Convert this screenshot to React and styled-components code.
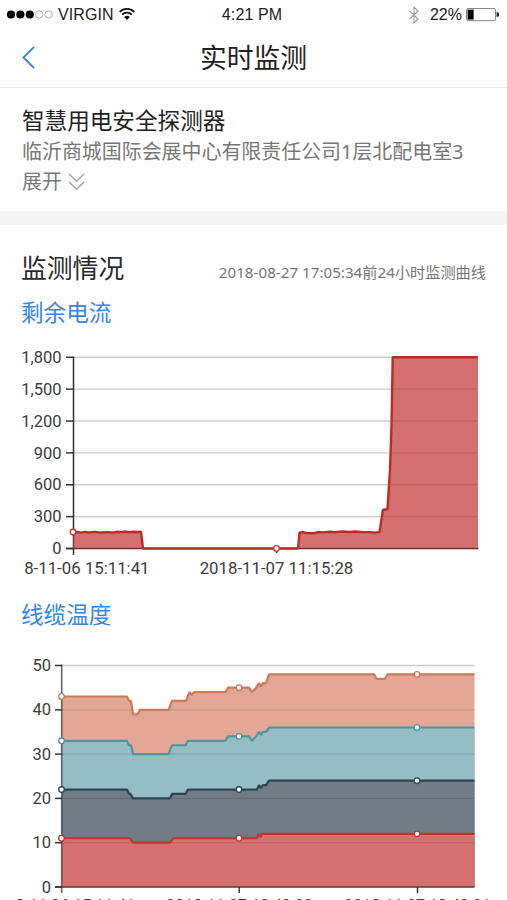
import React from "react";
import styled, { createGlobalStyle } from "styled-components";

const GlobalStyle = createGlobalStyle`
  * {
    box-sizing: border-box;
  }
  body {
    margin: 0;
    background: #fefefe;
    font-family: "Noto Sans", "Noto Sans CJK SC", sans-serif;
  }
`;

const Page = styled.div`
  width: 507px;
  height: 900px;
  overflow: hidden;
  background: #fefefe;
`;

const StatusBar = styled.div`
  height: 29px;
  padding: 0 8px 0 6px;
  display: grid;
  grid-template-columns: 1fr auto 1fr;
  align-items: center;
  font-family: "Liberation Sans", sans-serif;
  font-size: 16px;
  color: #222;
`;

const StatusGroup = styled.div`
  display: flex;
  align-items: center;
  justify-content: ${(props) => (props.$end ? "flex-end" : "flex-start")};
`;

const Carrier = styled.span`
  margin: 0 5px 0 4px;
  letter-spacing: 0.1px;
`;

const Time = styled.span`
  margin-right: 1px;
  letter-spacing: 0.1px;
`;

const Percent = styled.span`
  margin: 0 4px 0 11px;
`;

const Header = styled.header`
  height: 59px;
  padding: 0 21px;
  display: grid;
  grid-template-columns: 1fr auto 1fr;
  align-items: center;
  border-bottom: 1px solid #e6e6e6;
`;

const Title = styled.h1`
  margin: 0;
  font-size: 26.8px;
  line-height: 40px;
  font-weight: 400;
  color: #222;
`;

const Info = styled.section`
  height: 123px;
  padding: 17px 22px 0;
`;

const Name = styled.h2`
  margin: 0;
  font-size: 22.6px;
  line-height: 31px;
  font-weight: 400;
  color: #222;
`;

const Address = styled.div`
  padding-top: 1px;
  font-size: 19.95px;
  line-height: 30px;
  white-space: nowrap;
  color: #777;
`;

const Expand = styled.div`
  display: flex;
  align-items: center;
  gap: 6px;
  font-size: 19.9px;
  line-height: 30px;
  color: #777;
`;

const Divider = styled.div`
  height: 14px;
  background: #f4f4f4;
`;

const Monitor = styled.section`
  padding-top: 23px;
`;

const MonitorHead = styled.div`
  height: 44px;
  padding: 0 21px;
  display: flex;
  justify-content: space-between;
  align-items: baseline;
`;

const MonitorTitle = styled.h2`
  margin: 0;
  font-size: 25.8px;
  line-height: 40px;
  font-weight: 400;
  color: #2a2a2a;
`;

const Range = styled.span`
  font-size: 15.2px;
  color: #777;
`;

const ChartTitle = styled.h3`
  margin: 0;
  padding-left: 21px;
  height: 42px;
  font-size: 22.6px;
  line-height: 42px;
  font-weight: 400;
  color: #3585e8;
`;

const Chart = styled.svg`
  display: block;
`;

const AxisText = styled.text`
  font-family: Roboto, sans-serif;
  font-size: ${(props) => props.$size || 16.5}px;
  fill: #3c3c3c;
`;

const SignalDots = () => (
  <svg width="48" height="12" viewBox="0 0 48 12">
    {[0, 1, 2, 3, 4].map((i) => (
      <circle
        key={i}
        cx={5 + i * 9.4}
        cy="5.5"
        r={i < 3 ? 4.1 : 3.7}
        fill={i < 3 ? "#000" : "none"}
        stroke={i < 3 ? "none" : "#999"}
        strokeWidth="0.8"
      />
    ))}
  </svg>
);

const Wifi = () => (
  <svg width="16" height="14" viewBox="0 0 16 14">
    <g fill="none" stroke="#111" strokeWidth="1.9">
      <path d="M0.7 3.9A10.3 10.3 0 0 1 15.3 3.9" />
      <path d="M3.2 6.6A6.8 6.8 0 0 1 12.8 6.6" />
    </g>
    <path d="M8 12L5.1 9.1A4.1 4.1 0 0 1 10.9 9.1Z" fill="#111" />
  </svg>
);

const Bluetooth = () => (
  <svg width="10" height="18" viewBox="0 0 10 18">
    <path
      d="M0.6 4.8L9 13L5 16.8V1.2L9 5L0.6 13.2"
      fill="none"
      stroke="#999"
      strokeWidth="1.1"
    />
  </svg>
);

const Battery = () => (
  <svg width="33" height="14" viewBox="0 0 33 14">
    <rect x="0.5" y="0.5" width="29" height="12.2" rx="1.5" fill="#fff" stroke="#888" />
    <rect x="1.6" y="1.6" width="6" height="10" fill="#000" />
    <path d="M30.6 4.1A2.5 2.5 0 0 1 30.6 9.1Z" fill="#222" />
  </svg>
);

const BackIcon = () => (
  <svg width="15" height="24" viewBox="0 0 15 24">
    <path d="M13 1L2.4 11.5L13 22" fill="none" stroke="#3a86e6" strokeWidth="1.8" />
  </svg>
);

const DoubleDown = () => (
  <svg width="17" height="18" viewBox="0 0 17 18">
    <path
      d="M1 1L8.5 8.2L16 1M1 9L8.5 16.2L16 9"
      fill="none"
      stroke="#999"
      strokeWidth="1.1"
    />
  </svg>
);

// [x, value] pairs, x in chart pixels
const currentLine = [
  [73, 155], [77, 156], [81, 149], [85, 156], [89, 151], [95, 157], [101, 150],
  [107, 154], [112, 150], [118, 158], [121, 153], [125, 160], [129, 153],
  [134, 158], [138, 155], [141, 158], [143, 0], [298, 0], [299.5, 150],
  [303, 155], [307, 145], [314, 144], [318, 155], [323, 152], [330, 158],
  [335, 153], [342, 160], [350, 156], [355, 160], [363, 154], [370, 154],
  [375, 149], [379.5, 154], [383, 365], [387.5, 370], [390, 740], [391.5, 1150],
  [392.7, 1800], [478, 1800],
];

const temps = [
  {
    stroke: "#c23531",
    fill: "#d6716f",
    dots: [11, 11, 12],
    points: [
      [62, 11], [130, 11], [133, 10], [170, 10], [173, 11], [257, 11],
      [259, 12], [260.5, 11.2], [262, 12], [474.5, 12],
    ],
  },
  {
    stroke: "#2f4554",
    fill: "#707d87",
    dots: [22, 22, 24],
    points: [
      [62, 22], [127, 22], [129, 21], [130.5, 21], [133, 20], [170, 20],
      [172, 21], [185.5, 21], [188, 22], [257, 22], [259, 23],
      [261, 22.3], [263, 23], [266, 23], [269, 24], [474.5, 24],
    ],
  },
  {
    stroke: "#4f959d",
    fill: "#94bdc4",
    dots: [33, 34, 36],
    points: [
      [62, 33], [127, 33], [129, 32], [131, 32], [133, 30], [168.5, 30],
      [172, 32], [185.5, 32], [188, 33], [225.5, 33], [228, 34], [249, 34],
      [252, 33], [256, 34], [259, 35], [261, 34.3], [263, 35], [266, 35],
      [269, 36], [474.5, 36],
    ],
  },
  {
    stroke: "#cc785c",
    fill: "#e2a895",
    dots: [43, 45, 48],
    points: [
      [62, 43], [127, 43], [129, 42], [131, 42], [133, 39], [137.5, 39],
      [140, 40], [168.5, 40], [172, 42], [186, 42], [189.5, 44],
      [191.5, 43.3], [194, 44], [225.5, 44], [228, 45], [249, 45],
      [252, 44], [256, 45], [259, 46], [261, 45.3], [263, 46],
      [266, 46], [269, 48], [374, 48], [376.5, 47], [385, 47], [387.5, 48],
      [474.5, 48],
    ],
  },
];

const toPath = (points, y) =>
  "M" + points.map(([x, v]) => `${x} ${y(v).toFixed(2)}`).join("L");

const toArea = (points, y) =>
  `${toPath(points, y)}V${y(0)}H${points[0][0]}Z`;

const Dot = ({ x, y, color }) => (
  <circle cx={x} cy={y} r="2.8" fill="#fff" stroke={color} strokeWidth="1.3" />
);

const CurrentChart = () => {
  const y = (v) => 214.5 - (v / 1800) * 191.2;
  const ticks = [0, 300, 600, 900, 1200, 1500, 1800];

  return (
    <Chart width="507" height="260" viewBox="0 0 507 260">
      {ticks.slice(1).map((t) => (
        <path key={t} d={`M74 ${y(t)}H478`} stroke="#ccc" strokeWidth="1.4" />
      ))}
      <path d="M73.5 22.5V221M276.5 214V219" stroke="#333" strokeWidth="1.5" />
      <path d="M66 214.5H478.5" stroke="#333" strokeWidth="1.6" />
      {ticks.map((t) => (
        <React.Fragment key={t}>
          <path d={`M66 ${y(t)}H73.5`} stroke="#333" strokeWidth="1.5" />
          <AxisText x="61.5" y={y(t) + 5.6} textAnchor="end">
            {t.toLocaleString("en-US")}
          </AxisText>
        </React.Fragment>
      ))}
      <path d={toArea(currentLine, y)} fill="#c23531" fillOpacity="0.7" />
      <path
        d={toPath(currentLine, y)}
        fill="none"
        stroke="#bd2b28"
        strokeWidth="2.4"
        strokeLinejoin="bevel"
      />
      <Dot x={73} y={y(155)} color="#c23531" />
      <Dot x={276.5} y={y(0)} color="#c23531" />
      <AxisText x="149.5" y="239.5" $size={16.8} textAnchor="end">
        8-11-06 15:11:41
      </AxisText>
      <AxisText x="276.5" y="239.5" $size={16.8} textAnchor="middle">
        2018-11-07 11:15:28
      </AxisText>
    </Chart>
  );
};

const TemperatureChart = () => {
  const y = (v) => 251 - v * 4.43;
  const ticks = [0, 10, 20, 30, 40, 50];
  const dotX = [61.5, 239, 417];

  return (
    <Chart width="507" height="290" viewBox="0 0 507 290">
      <path d={`M62 ${y(50)}H474.5`} stroke="#ccc" strokeWidth="1.4" />
      {/* top series first so the lower ones cover it */}
      {[...temps].reverse().map((s) => (
        <path key={s.stroke} d={toArea(s.points, y)} fill={s.fill} />
      ))}
      {ticks.slice(1, 5).map((t) => (
        <path key={t} d={`M62 ${y(t)}H474.5`} stroke="#000" strokeOpacity="0.1" strokeWidth="1.3" />
      ))}
      <path d="M61.7 28.5V257" stroke="#333" strokeOpacity="0.75" strokeWidth="1.6" />
      <path d="M55 251H474.5" stroke="#5b3434" strokeWidth="1.6" />
      <path d="M239.2 251V257M417.5 251V257" stroke="#333" strokeWidth="1.4" />
      {ticks.map((t) => (
        <React.Fragment key={t}>
          <path d={`M55 ${y(t)}H62`} stroke="#333" strokeWidth="1.5" />
          <AxisText x="51" y={y(t) + 5.6} textAnchor="end">
            {t}
          </AxisText>
        </React.Fragment>
      ))}
      {temps.map((s) => (
        <path
          key={s.stroke}
          d={toPath(s.points, y)}
          fill="none"
          stroke={s.stroke}
          strokeWidth="2.2"
          strokeLinejoin="bevel"
        />
      ))}
      {temps.map((s) =>
        s.dots.map((v, i) => (
          <Dot key={`${s.stroke}-${i}`} x={dotX[i]} y={y(v)} color={s.stroke} />
        ))
      )}
      <AxisText x="135" y="275" $size={16} textAnchor="end">
        8-11-06 15:11:41
      </AxisText>
      <AxisText x="239.5" y="275" $size={16} textAnchor="middle">
        2018-11-07 10:40:20
      </AxisText>
      <AxisText x="417.5" y="275" $size={16} textAnchor="middle">
        2018-11-07 18:40:21
      </AxisText>
    </Chart>
  );
};

const App = () => {
  return (
    <Page>
      <GlobalStyle />
      <StatusBar>
        <StatusGroup>
          <SignalDots />
          <Carrier>VIRGIN</Carrier>
          <Wifi />
        </StatusGroup>
        <Time>4:21 PM</Time>
        <StatusGroup $end>
          <Bluetooth />
          <Percent>22%</Percent>
          <Battery />
        </StatusGroup>
      </StatusBar>
      <Header>
        <BackIcon />
        <Title>实时监测</Title>
      </Header>
      <Info>
        <Name>智慧用电安全探测器</Name>
        <Address>临沂商城国际会展中心有限责任公司1层北配电室3</Address>
        <Expand>
          展开
          <DoubleDown />
        </Expand>
      </Info>
      <Divider />
      <Monitor>
        <MonitorHead>
          <MonitorTitle>监测情况</MonitorTitle>
          <Range>2018-08-27 17:05:34前24小时监测曲线</Range>
        </MonitorHead>
        <ChartTitle>剩余电流</ChartTitle>
        <CurrentChart />
        <ChartTitle>线缆温度</ChartTitle>
        <TemperatureChart />
      </Monitor>
    </Page>
  );
};

export default App;
